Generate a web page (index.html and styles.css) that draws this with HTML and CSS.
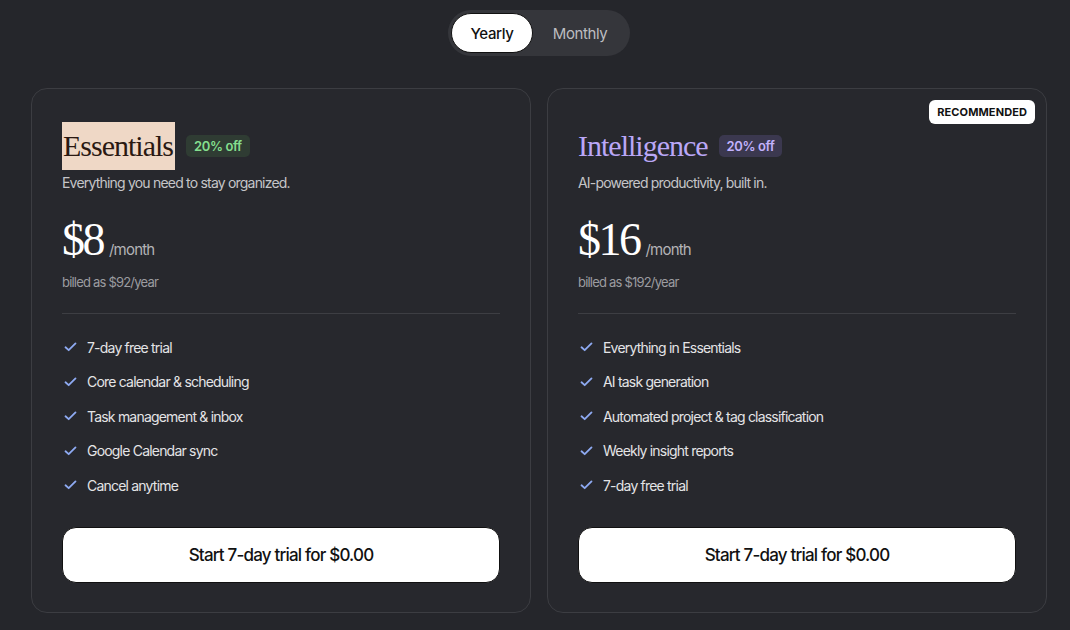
FILE: index.html
```html
<!DOCTYPE html>
<html lang="en">
<head>
    <meta charset="UTF-8">
    <meta name="viewport" content="width=device-width, initial-scale=1.0">
    <title>Pricing</title>
    <link rel="stylesheet" href="styles.css">
</head>
<body>

<div class="page">
    <div class="billing-toggle">
        <button class="toggle-option active">Yearly</button>
        <button class="toggle-option">Monthly</button>
    </div>

    <div class="plans">
        <div class="plan">
            <div class="plan-head">
                <h2 class="plan-name essentials">Essentials</h2>
                <span class="discount green">20% off</span>
            </div>
            <p class="plan-desc">Everything you need to stay organized.</p>
            <div class="price"><span class="amount">$8</span><span class="period">/month</span></div>
            <p class="billed">billed as $92/year</p>
            <hr class="divider">
            <ul class="features">
                <li><svg class="check" viewBox="0 0 14 11"><polyline points="1.5,5.8 5,9 12.5,1.5"/></svg>7-day free trial</li>
                <li><svg class="check" viewBox="0 0 14 11"><polyline points="1.5,5.8 5,9 12.5,1.5"/></svg>Core calendar &amp; scheduling</li>
                <li><svg class="check" viewBox="0 0 14 11"><polyline points="1.5,5.8 5,9 12.5,1.5"/></svg>Task management &amp; inbox</li>
                <li><svg class="check" viewBox="0 0 14 11"><polyline points="1.5,5.8 5,9 12.5,1.5"/></svg>Google Calendar sync</li>
                <li><svg class="check" viewBox="0 0 14 11"><polyline points="1.5,5.8 5,9 12.5,1.5"/></svg>Cancel anytime</li>
            </ul>
            <button class="start-btn">Start 7-day trial for $0.00</button>
        </div>

        <div class="plan">
            <span class="recommended">RECOMMENDED</span>
            <div class="plan-head">
                <h2 class="plan-name intelligence">Intelligence</h2>
                <span class="discount purple">20% off</span>
            </div>
            <p class="plan-desc">AI-powered productivity, built in.</p>
            <div class="price"><span class="amount">$16</span><span class="period">/month</span></div>
            <p class="billed">billed as $192/year</p>
            <hr class="divider">
            <ul class="features">
                <li><svg class="check" viewBox="0 0 14 11"><polyline points="1.5,5.8 5,9 12.5,1.5"/></svg>Everything in Essentials</li>
                <li><svg class="check" viewBox="0 0 14 11"><polyline points="1.5,5.8 5,9 12.5,1.5"/></svg>AI task generation</li>
                <li><svg class="check" viewBox="0 0 14 11"><polyline points="1.5,5.8 5,9 12.5,1.5"/></svg>Automated project &amp; tag classification</li>
                <li><svg class="check" viewBox="0 0 14 11"><polyline points="1.5,5.8 5,9 12.5,1.5"/></svg>Weekly insight reports</li>
                <li><svg class="check" viewBox="0 0 14 11"><polyline points="1.5,5.8 5,9 12.5,1.5"/></svg>7-day free trial</li>
            </ul>
            <button class="start-btn">Start 7-day trial for $0.00</button>
        </div>
    </div>
</div>

</body>
</html>
```

FILE: styles.css
```css
body {
    background: #25262b;
    color: #e6e6e6;
    font-family: Inter, "Noto Sans", sans-serif;
    margin: 0;
    padding: 0;
}
.page {
    display: flex;
    flex-direction: column;
    align-items: center;
    padding: 10px 0 0 8px;
}
.billing-toggle {
    display: flex;
    background: #35363b;
    border-radius: 23px;
    padding: 3px;
    height: 40px;
}
.toggle-option {
    font-family: inherit;
    font-size: 15px;
    letter-spacing: -0.4px;
    border: none;
    background: none;
    color: #bdbdc0;
    border-radius: 20px;
    padding: 0;
    width: 94px;
    cursor: pointer;
}
.toggle-option.active {
    width: 82px;
    background: #fff;
    color: #111;
    font-weight: 500;
    border: 1px solid #111;
}
.plans {
    display: flex;
    gap: 16px;
    margin-top: 32px;
    width: 1016px;
}
.plan {
    position: relative;
    flex: 1;
    height: 525px;
    box-sizing: border-box;
    background: #27282d;
    border: 1px solid #3c3d42;
    border-radius: 16px;
    padding: 33px 30px 30px;
}
.recommended {
    position: absolute;
    top: 11px;
    right: 11px;
    background: #fff;
    color: #111;
    font-size: 11px;
    font-weight: 700;
    letter-spacing: 0.1px;
    padding: 5px 8px;
    border-radius: 6px;
}
.plan-head {
    display: flex;
    align-items: center;
    gap: 11px;
    height: 48px;
}
.plan-name {
    font-family: "Liberation Serif", serif;
    font-weight: 400;
    font-size: 30px;
    letter-spacing: -1px;
    line-height: 48px;
    margin: 0;
}
.plan-name.essentials {
    background: #efd8c6;
    color: #2a1912;
    padding: 0 2px 0 1px;
}
.plan-name.intelligence {
    color: #baa7f7;
}
.discount {
    font-size: 13px;
    font-weight: 600;
    letter-spacing: -0.4px;
    padding: 3px 8px;
    border-radius: 5px;
}
.discount.green {
    background: #2f3c33;
    color: #84df8e;
}
.discount.purple {
    background: #3b384f;
    color: #c2b2fd;
}
.plan-desc {
    margin: 3px 0 0;
    font-size: 14px;
    line-height: 20px;
    color: #c5c5c8;
    letter-spacing: -0.8px;
}
.price {
    display: flex;
    align-items: baseline;
    margin-top: 20px;
    height: 50px;
}
.amount {
    font-family: "Liberation Serif", serif;
    font-size: 46px;
    letter-spacing: -2.5px;
    color: #fff;
}
.period {
    font-size: 15px;
    color: #b3b3b6;
    margin-left: 6px;
    letter-spacing: -0.8px;
}
.billed {
    margin: 11px 0 0;
    font-size: 13px;
    color: #9c9ca0;
    letter-spacing: -0.8px;
}
.divider {
    border: none;
    border-top: 1px solid #3d3e43;
    margin: 23px 0 0;
}
.features {
    list-style: none;
    padding: 0;
    margin: 16px 0 0;
}
.features li {
    display: flex;
    align-items: center;
    height: 34.5px;
    font-size: 14px;
    color: #e4e4e6;
    letter-spacing: -0.8px;
}
.check {
    width: 13px;
    height: 10px;
    margin: 0 10px 0 2px;
    fill: none;
    stroke: #8eaaf2;
    stroke-width: 2;
    stroke-linecap: round;
    stroke-linejoin: round;
}
.start-btn {
    display: block;
    width: 100%;
    height: 56px;
    margin-top: 24px;
    background: #fff;
    color: #111;
    font-family: inherit;
    font-size: 17px;
    font-weight: 500;
    letter-spacing: -0.8px;
    border: 1px solid #111;
    border-radius: 14px;
    cursor: pointer;
}
```
